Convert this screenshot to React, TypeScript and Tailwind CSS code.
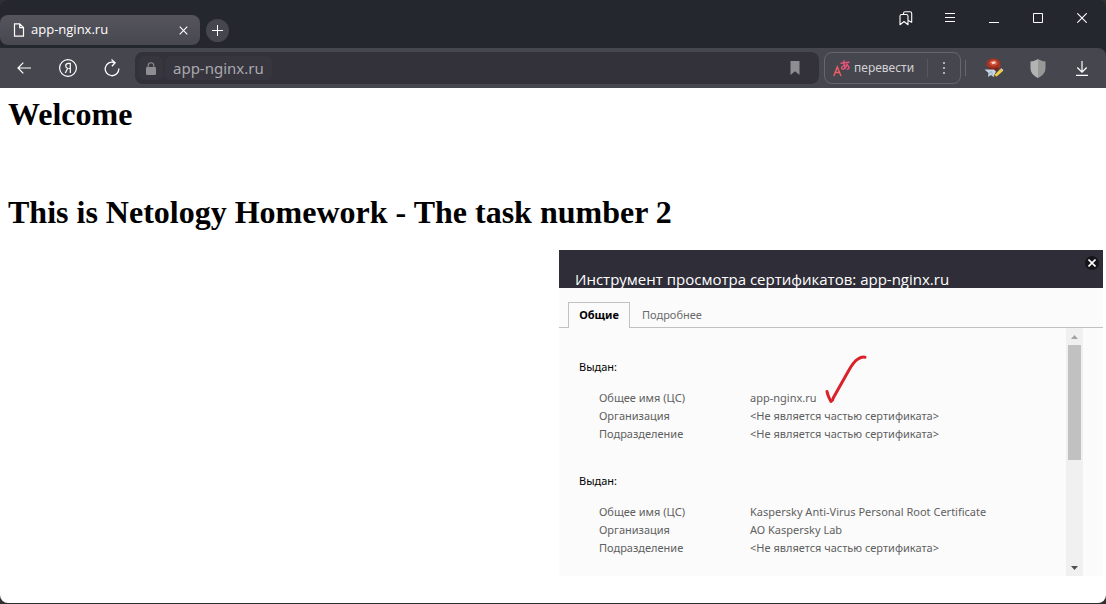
import type { ReactNode } from "react";

type Row = { label: string; value: string; checked?: boolean };

const NOT_PART = "<Не является частью сертификата>";

const subject: Row[] = [
  { label: "Общее имя (ЦС)", value: "app-nginx.ru", checked: true },
  { label: "Организация", value: NOT_PART },
  { label: "Подразделение", value: NOT_PART },
];

const issuer: Row[] = [
  { label: "Общее имя (ЦС)", value: "Kaspersky Anti-Virus Personal Root Certificate" },
  { label: "Организация", value: "АО Kaspersky Lab" },
  { label: "Подразделение", value: NOT_PART },
];

function IconButton({ label, children }: { label: string; children: ReactNode }) {
  return (
    <button type="button" aria-label={label} className="flex h-6 w-11 shrink-0 items-center justify-center text-white">
      {children}
    </button>
  );
}

function TitleBar() {
  return (
    <header className="flex h-12 items-start justify-between rounded-t-lg bg-[#25272f]">
      <div className="flex items-center gap-1.5 pt-[15px]">
        <div className="flex h-[30px] w-[200px] items-center rounded-lg bg-linear-to-b from-[#55545c] to-[#484850] pr-3 pl-[13px] text-white">
          <svg width="12" height="14" viewBox="0 0 12 14" fill="none" stroke="currentColor" strokeWidth="1.2">
            <path d="M1.5 .8h5.2l3.8 3.8v8.6h-9zM6.7 .8v3.8h3.8" />
          </svg>
          <span className="ml-1.5 flex-1 font-['Open_Sans','Noto_Sans',sans-serif] text-[13px]">app-nginx.ru</span>
          <button type="button" aria-label="Закрыть вкладку">
            <svg width="9" height="9" viewBox="0 0 9 9" stroke="currentColor" strokeWidth="1.1">
              <path d="M.7 .7l7.6 7.6M8.3 .7L.7 8.3" />
            </svg>
          </button>
        </div>
        <button type="button" aria-label="Новая вкладка" className="flex size-[23px] items-center justify-center rounded-full bg-[#46464e] text-white">
          <svg width="11" height="11" viewBox="0 0 11 11" stroke="currentColor">
            <path d="M5.5 0v11M0 5.5h11" />
          </svg>
        </button>
      </div>
      <div className="flex pt-1.5 pr-0.5">
        <IconButton label="Коллекции">
          <svg width="14" height="15" viewBox="0 0 14 15" fill="none" stroke="currentColor" strokeWidth="1.1" strokeLinejoin="round">
            <path d="M1 13.7V5.2q0-1.7 1.7-1.7h4.6Q9 3.500 9 5.200v8.500L5 10.500z" />
            <path d="M4.500 3.300V2.500Q4.500 .8 6.200 .8h4.800Q12.700 .8 12.700 2.500v8.800L9.200 9.400" />
          </svg>
        </IconButton>
        <IconButton label="Меню">
          <svg width="10" height="10" viewBox="0 0 10 10" stroke="currentColor">
            <path d="M0 .5h10M0 4.500h10M0 8.500h10" />
          </svg>
        </IconButton>
        <IconButton label="Свернуть">
          <svg width="10" height="10" viewBox="0 0 10 10" stroke="currentColor">
            <path d="M0 9.500h10" />
          </svg>
        </IconButton>
        <IconButton label="Развернуть">
          <svg width="10" height="10" viewBox="0 0 10 10" fill="none" stroke="currentColor">
            <path d="M.5 .5h9v9h-9z" />
          </svg>
        </IconButton>
        <IconButton label="Закрыть">
          <svg width="10" height="10" viewBox="0 0 10 10" stroke="currentColor" strokeWidth="1.1">
            <path d="M.3 .3l9.400 9.400M9.700 .3L.3 9.700" />
          </svg>
        </IconButton>
      </div>
    </header>
  );
}

function Toolbar() {
  return (
    <div className="bg-[#25272f]">
      <div className="flex h-10 items-center rounded-tr-lg bg-[#46464e] pr-0.5 pl-0.5">
        <IconButton label="Назад">
          <svg width="14" height="12" viewBox="0 0 14 12" fill="none" stroke="currentColor" strokeWidth="1.2">
            <path d="M14 6H1M6.300 .6L1 6l5.300 5.400" />
          </svg>
        </IconButton>
        <IconButton label="Яндекс">
          <svg width="18" height="18" viewBox="0 0 18 18" fill="none" stroke="currentColor" strokeWidth="1.2">
            <circle cx="9" cy="9" r="8.400" />
            <path d="M11.300 14V4.300H9.600C7.700 4.300 6.700 5.400 6.700 6.800c0 1.300.8 2 1.900 2.700L6.300 14M11.300 9.500H9.500" />
          </svg>
        </IconButton>
        <IconButton label="Обновить">
          <svg width="16" height="18" viewBox="0 0 16 18" fill="none" stroke="currentColor" strokeWidth="1.3">
            <path d="M14.800 9.500A6.800 6.800 0 1 1 10.500 3.600M7.500 .6l3.600 3.100-3.200 3.500" />
          </svg>
        </IconButton>
        <div className="mr-[5px] ml-px flex h-8 min-w-0 flex-1 items-center rounded-lg bg-[#33323b] pr-[18px] pl-1">
          <button type="button" aria-label="Сведения о сайте" className="flex h-6 w-6 items-center justify-center rounded-md bg-[#37363f] text-[#8d8d92]">
            <svg width="10" height="13" viewBox="0 0 10 13">
              <rect x="0" y="5" width="10" height="8" rx="1.200" fill="currentColor" />
              <path d="M2.200 5.500V3.600a2.800 2.800 0 0 1 5.600 0v1.900" fill="none" stroke="currentColor" strokeWidth="1.100" />
            </svg>
          </button>
          <input
            aria-label="Адрес"
            defaultValue="app-nginx.ru"
            className="ml-0.5 h-6 w-[107px] rounded-md bg-[#37363f] px-2 text-[15px] text-[#a9a9ae] outline-none"
          />
          <button type="button" aria-label="Добавить в закладки" className="ml-auto text-[#8d8d92]">
            <svg width="12" height="14" viewBox="0 0 12 14">
              <path d="M1.500 0h9v14L6 10.300 1.500 14z" fill="currentColor" />
            </svg>
          </button>
        </div>
        <div className="flex h-8 w-[137px] items-center rounded-lg border border-[#66666e] pl-2">
          <button type="button" className="flex flex-1 items-center gap-1 text-[12px] text-[#d2d2d5]">
            <svg width="17" height="17" viewBox="0 0 17 17" fill="none" strokeLinecap="round" strokeWidth="1.400">
              <path d="M1 15.500L4.300 7 7.800 15.500M2.100 12.500h4.500" stroke="#f0605f" />
              <path d="M8 3.200l8-.9M11 .8c-.4 3 .1 5.600 1.100 7.700M14.300 4.300c-.8 3.200-3.500 5.400-5.300 4.600-1.400-1 .8-3.800 4-3.800 3.100 0 4.200 2.900 1.400 4.400" stroke="#ec5279" />
            </svg>
            перевести
          </button>
          <span className="h-[18px] w-px bg-[#57575f]" />
          <button type="button" aria-label="Ещё" className="flex h-6 w-8 items-center justify-center text-[#b0b0b4]">
            <svg width="2" height="12" viewBox="0 0 2 12" fill="currentColor">
              <path d="M0 0h2v2H0zM0 5h2v2H0zM0 10h2v2H0z" />
            </svg>
          </button>
        </div>
        <span className="mr-1.5 ml-1 h-4 w-px bg-[#66666e]" />
        <IconButton label="Расширение">
          <svg width="20" height="20" viewBox="0 0 20 20">
            <path d="M2.500 6.500C2.500 3 5 .5 9.500 .5S16.500 3 16.500 6.500c0 3-1.500 5-4 5.200C8 12 3 10.500 2.500 6.500z" fill="#a63422" />
            <path d="M5 5c1-2.500 4-3.500 7-2.500 2 1 2.500 3 1 4.500C10 8.500 6 8 5 5z" fill="#cf5039" />
            <path d="M7 4l4-.8 1 2-3.500 1z" fill="#fbd9cb" />
            <path d="M4 9c3 1.500 7 1.500 11 0-.5 2.500-2.500 4-5 4S5 11.500 4 9z" fill="#7a2318" />
            <path d="M.5 11.500h5l4.500 0 2 2-2.500 5.500-2.500-2-3 2 .5-4z" fill="#c3d4e2" />
            <path d="M4.500 15.500l3-2 1 3.500" fill="none" stroke="#8fabc1" strokeWidth=".8" />
            <path d="M10.500 17l5.800-6 2.400 2.200-6 5.300-2.700.6z" fill="#f2cc42" />
            <path d="M16.300 11l1-.8 2 1.800-.6 1.200z" fill="#e8e1cc" />
            <path d="M10.500 17l2.200 1.500-2.700.6z" fill="#4a3a20" />
          </svg>
        </IconButton>
        <IconButton label="Защита">
          <svg width="16" height="19" viewBox="0 0 16 19">
            <path d="M8 0C5.500 1.600 3 2.300 .5 2.600V9c0 5 3.500 8 7.500 10z" fill="#b3b3b3" />
            <path d="M8 0c2.500 1.600 5 2.300 7.500 2.600V9c0 5-3.500 8-7.500 10z" fill="#989898" />
          </svg>
        </IconButton>
        <IconButton label="Загрузки">
          <svg width="12" height="15" viewBox="0 0 12 15" fill="none" stroke="currentColor" strokeWidth="1.200">
            <path d="M6 0v11M1.300 6.500L6 11.200l4.700-4.700M0 14.300h12" />
          </svg>
        </IconButton>
      </div>
    </div>
  );
}

function CheckMark() {
  return (
    <svg width="46" height="52" viewBox="0 0 46 52" fill="none" stroke="#d9222a" strokeWidth="3" strokeLinecap="round" strokeLinejoin="round" className="absolute bottom-0 left-full ml-1.5">
      <path d="M4 36.500c.5 3 1.500 5.500 4 10 1-.5 2-1.500 2.500-4L26 15c2.500-4.500 5-8.500 9-11 2.500-1.800 4.500-2.200 7-1.800" />
    </svg>
  );
}

function CertificateSection({ title, rows }: { title: string; rows: Row[] }) {
  return (
    <section>
      <h3 className="text-black">{title}</h3>
      <table className="mt-[13px] ml-5 text-left">
        <tbody>
          {rows.map((row) => (
            <tr key={row.label}>
              <th scope="row" className="w-[151px] p-0 font-normal">{row.label}</th>
              <td className="p-0 whitespace-nowrap">
                <span className="relative inline-block align-top">
                  {row.value}
                  {row.checked && <CheckMark />}
                </span>
              </td>
            </tr>
          ))}
        </tbody>
      </table>
    </section>
  );
}

function CertificateViewer() {
  return (
    <section aria-label="Сертификат" className="mt-5 mr-[3px] w-[544px] max-w-full self-end bg-[#fbfbfb]">
      <div className="flex h-[38px] items-start justify-between bg-[#2f2e38] pr-1 pl-4">
        <h2 className="pt-5 font-['Open_Sans','Noto_Sans',sans-serif] text-[15px] leading-[18px] whitespace-nowrap text-white">Инструмент просмотра сертификатов: app-nginx.ru</h2>
        <button type="button" aria-label="Закрыть окно" className="mt-1.5 flex size-3.5 items-center justify-center rounded-full bg-[#15151a] text-white">
          <svg width="8" height="8" viewBox="0 0 8 8" stroke="currentColor" strokeWidth="1.600">
            <path d="M.5 .5l7 7M7.500 .5l-7 7" />
          </svg>
        </button>
      </div>
      <div role="tablist" className="flex h-10 items-end border-b border-[#c1c1c1] pl-[9px] text-[11px]">
        <button type="button" role="tab" aria-selected="true" className="-mb-px h-[26px] w-[62px] border border-b-0 border-[#c1c1c1] bg-[#fbfbfb] font-bold text-black">
          Общие
        </button>
        <button type="button" role="tab" aria-selected="false" className="h-6 px-3 text-[#6b6b6b]">
          Подробнее
        </button>
      </div>
      <div className="flex pr-5">
        <div className="flex flex-1 flex-col gap-[29px] pt-[30px] pb-[19px] pl-5 text-[11px] leading-[18px] text-[#5f5f5f]">
          <CertificateSection title="Выдан:" rows={subject} />
          <CertificateSection title="Выдан:" rows={issuer} />
        </div>
        <div className="flex w-[17px] flex-col items-center bg-[#f0f0f0]">
          <div className="flex h-[17px] items-center">
            <svg width="7" height="4" viewBox="0 0 7 4" fill="#a3a3a3"><path d="M3.500 0L7 4H0z" /></svg>
          </div>
          <div className="h-[115px] w-[13px] bg-[#c1c1c1]" />
          <div className="mt-auto flex h-[17px] items-center">
            <svg width="7" height="4" viewBox="0 0 7 4" fill="#505050"><path d="M3.500 4L7 0H0z" /></svg>
          </div>
        </div>
      </div>
    </section>
  );
}

export default function App() {
  return (
    <div className="flex min-h-screen flex-col bg-[#303033] pb-px font-['Noto_Sans','Open_Sans',sans-serif]">
      <TitleBar />
      <Toolbar />
      <main className="flex flex-1 flex-col rounded-b-lg bg-white pt-2">
        <div className="flex flex-col gap-[62px] px-2 font-['Liberation_Serif',serif] text-[32px] leading-9 font-bold text-black">
          <h1>Welcome</h1>
          <h1>This is Netology Homework - The task number 2</h1>
        </div>
        <CertificateViewer />
      </main>
    </div>
  );
}
